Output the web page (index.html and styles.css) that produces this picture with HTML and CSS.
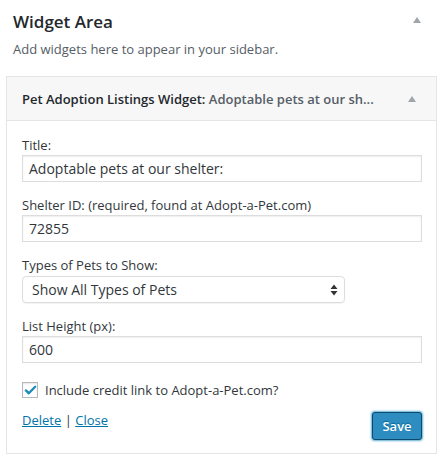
FILE: index.html
```html
<!DOCTYPE html>
<html>
<head>
<meta charset="utf-8">
<link rel="stylesheet" href="styles.css">
</head>
<body>
<div class="area">
  <div class="area-head">
    <h2 class="area-title">Widget Area</h2>
    <span class="tri tri-top"></span>
  </div>
  <p class="area-desc">Add widgets here to appear in your sidebar.</p>
  <div class="widget">
    <div class="widget-top">
      <div class="widget-title"><strong>Pet Adoption Listings Widget:</strong> <span class="in-title">Adoptable pets at our sh...</span></div>
      <span class="tri"></span>
    </div>
    <div class="widget-inside">
      <div class="field">
        <label class="lbl">Title:</label>
        <div class="input">Adoptable pets at our shelter:</div>
      </div>
      <div class="field">
        <label class="lbl">Shelter ID: (required, found at Adopt-a-Pet.com)</label>
        <div class="input">72855</div>
      </div>
      <div class="field">
        <label class="lbl">Types of Pets to Show:</label>
        <div class="select">
          <span>Show All Types of Pets</span>
          <svg class="sel-arrows" width="8" height="12" viewBox="0 0 8 12"><path d="M4 0.5 L7.5 5 L0.5 5 Z M0.5 7 L7.5 7 L4 11.5 Z" fill="#333"/></svg>
        </div>
      </div>
      <div class="field">
        <label class="lbl">List Height (px):</label>
        <div class="input">600</div>
      </div>
      <div class="check-row">
        <span class="checkbox"><svg width="14" height="12" viewBox="0 0 14 12"><path d="M2 6.5 L5.2 9.5 L12 2.5" fill="none" stroke="#1e8cbe" stroke-width="2.6" stroke-linecap="round" stroke-linejoin="round"/></svg></span>
        <span class="check-lbl">Include credit link to Adopt-a-Pet.com?</span>
      </div>
      <div class="actions">
        <div class="links"><a href="#">Delete</a> <span class="sep">|</span> <a href="#">Close</a></div>
        <button class="save">Save</button>
      </div>
    </div>
  </div>
</div>
</body>
</html>
```

FILE: styles.css
```css
* { box-sizing: border-box; }
html, body { margin: 0; padding: 0; background: #fff; }
body {
  font-family: "Open Sans", "Noto Sans", sans-serif;
  color: #23282d;
  font-size: 13px;
}
.area {
  width: 445px;
  padding: 0 8px 0 6px;
}
.area-head {
  display: flex;
  justify-content: space-between;
  align-items: center;
  padding: 10px 16px 0 7px;
  height: 34px;
}
.area-title {
  margin: 0;
  font-size: 17px;
  font-weight: 600;
  line-height: 24px;
  color: #23282d;
}
.tri {
  width: 0;
  height: 0;
  border-left: 4.5px solid transparent;
  border-right: 4.5px solid transparent;
  border-bottom: 6px solid #a0a5aa;
}
.tri-top { margin-top: -4px; }
.area-desc {
  margin: 6px 0 0 7px;
  font-size: 13px;
  line-height: 18px;
  color: #555d66;
}
.widget {
  margin-top: 18px;
  border: 1px solid #e5e5e5;
  background: #fff;
  height: 378px;
}
.widget-top {
  height: 44px;
  background: #f7f7f7;
  border-bottom: 1px solid #e5e5e5;
  display: flex;
  align-items: center;
  justify-content: space-between;
  padding: 0 20px 0 15px;
}
.widget-title {
  font-size: 13px;
  line-height: 18px;
  color: #23282d;
  white-space: nowrap;
}
.widget-title strong { font-weight: 600; }
.in-title { color: #555d66; font-weight: 600; }
.widget-inside {
  padding: 15px 14px 0 15px;
}
.field { margin-bottom: 14px; }
.lbl {
  display: block;
  font-size: 13px;
  line-height: 18px;
  color: #32373c;
  margin-bottom: 1px;
}
.input {
  height: 27px;
  border: 1px solid #ddd;
  box-shadow: inset 0 1px 2px rgba(0,0,0,.07);
  padding: 0 6px;
  font-size: 14px;
  line-height: 25px;
  color: #32373c;
}
.select {
  width: 323px;
  height: 27px;
  margin-top: 2px;
  border: 1px solid #ddd;
  border-radius: 4px;
  box-shadow: 0 1px 1px rgba(0,0,0,.05);
  display: flex;
  align-items: center;
  justify-content: space-between;
  padding: 0 6px 0 9px;
  font-size: 14px;
  color: #32373c;
}
.sel-arrows { display: block; }
.check-row {
  display: flex;
  align-items: center;
  margin-top: 19px;
  height: 16px;
}
.checkbox {
  width: 16px;
  height: 16px;
  border: 1px solid #b4b9be;
  box-shadow: inset 0 1px 2px rgba(0,0,0,.1);
  display: flex;
  align-items: center;
  justify-content: center;
  margin-right: 7px;
}
.checkbox svg { display: block; margin-left: 1px; }
.check-lbl { font-size: 13px; line-height: 18px; color: #32373c; }
.actions {
  display: flex;
  justify-content: space-between;
  align-items: flex-start;
  margin-top: 13px;
}
.links { font-size: 13px; line-height: 18px; color: #32373c; }
.links a { color: #0073aa; text-decoration: underline; }
.sep { color: #32373c; }
.save {
  margin-top: 1px;
  width: 50px;
  height: 28px;
  background: #2e8dc0;
  border: 1px solid #0b4a6e;
  border-radius: 3px;
  box-shadow: 0 0 2px 1px rgba(30,140,190,.7);
  color: #fff;
  font-family: "Open Sans", sans-serif;
  font-size: 13px;
  font-weight: 600;
  padding: 0;
  text-shadow: 0 -1px 1px #006799;
}
```
